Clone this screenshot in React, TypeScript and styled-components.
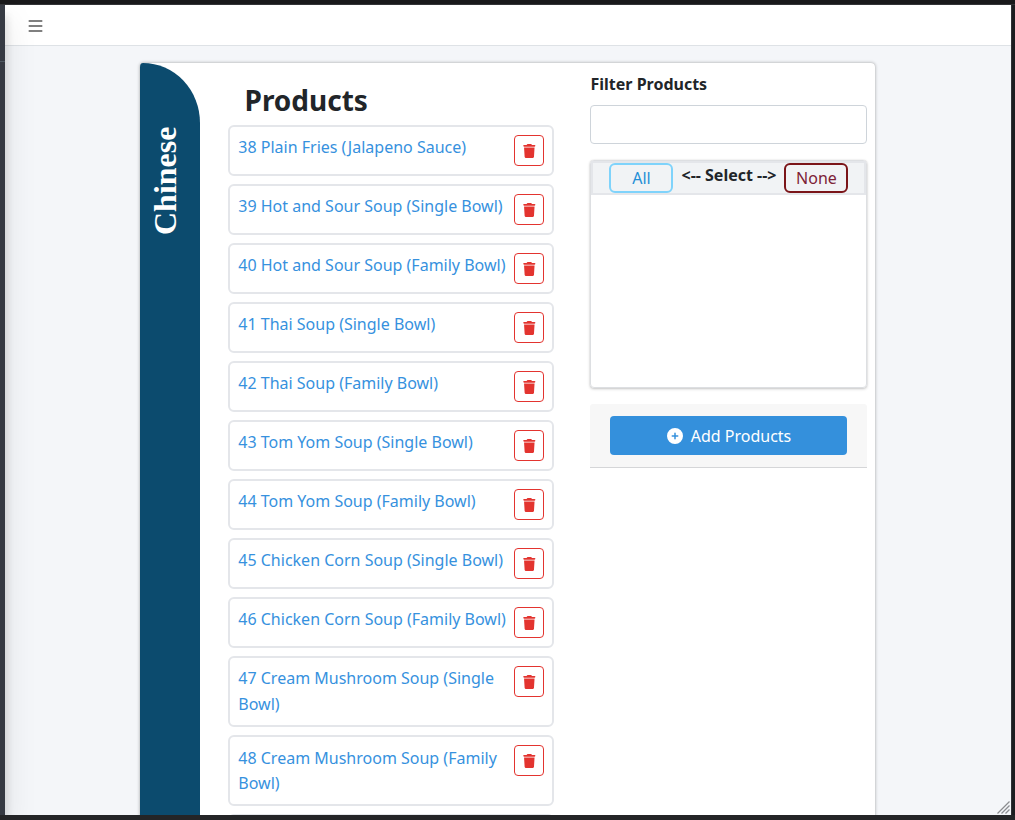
import React from "react";
import styled, { createGlobalStyle } from "styled-components";
import { FaBars, FaCirclePlus, FaTrash } from "react-icons/fa6";

const GlobalStyle = createGlobalStyle`
  *, *::before, *::after { box-sizing: border-box; }
  body {
    margin: 0;
    font: 400 16px/25.6px "Noto Sans", sans-serif;
    color: #212529;
    background: #1b1c1f;
  }
`;

const Frame = styled.div`
  display: grid;
  grid-template-columns: 5px 1006px 4px;
  grid-template-rows: 5px 810px 5px;
  width: 1015px;
  height: 820px;
  overflow: hidden;
  background: #1b1c1f;
`;

const TopEdge = styled.div`
  grid-column: 1 / -1;
  background: #19191b;
  border-bottom: 1px solid #333437;
`;

const SidebarEdge = styled.div`
  background: #363a43;
  padding-top: 56px;
  box-shadow: 0 14px 28px rgba(0, 0, 0, 0.25), 0 10px 10px rgba(0, 0, 0, 0.22);
  z-index: 1;
`;

const SidebarRule = styled.div`
  height: 1px;
  background: #4f5962;
`;

const Page = styled.div`
  position: relative;
  display: flex;
  flex-direction: column;
  background: #f4f6f9;
  overflow: hidden;
`;

const RightEdge = styled.div`
  background: #1c1d20;
  border-left: 1px solid #303135;
`;

const BottomEdge = styled.div`
  grid-column: 1 / -1;
  background: #242527;
  z-index: 2;
`;

const Navbar = styled.header`
  flex: none;
  display: flex;
  align-items: center;
  height: 41px;
  padding: 2px 0 0 22px;
  background: #fff;
  border-bottom: 1px solid #dee2e6;
  color: #808080;
  svg { display: block; transform: translateX(0.5px); }
`;

const Card = styled.main`
  flex: none;
  display: flex;
  width: 735px;
  height: 900px;
  margin: 17px 0 0 135px;
  background: #fff;
  border-radius: 4px;
  box-shadow: 0 0 1px rgba(0, 0, 0, 0.2), 0 0 3px 1px rgba(0, 0, 0, 0.18);
`;

const CategoryRail = styled.aside`
  flex: none;
  display: flex;
  width: 60px;
  padding-top: 62px;
  background: #0c4b6e;
  border-radius: 3px 57px 0 0 / 4px 60px 0 0;
`;

const CategoryName = styled.h1`
  margin: 0;
  height: 110px;
  width: 50px;
  writing-mode: vertical-rl;
  transform: rotate(180deg);
  font: 700 32px/50px "Liberation Serif", serif;
  color: #fff;
  white-space: nowrap;
`;

const ProductColumn = styled.section`
  flex: none;
  width: 326px;
  margin-left: 28px;
  padding-top: 16px;
`;

const Title = styled.h2`
  margin: 0;
  padding-left: 16.5px;
  height: 46px;
  font-size: 28px;
  line-height: 43px;
  font-weight: 700;
`;

const ProductRow = styled.div`
  display: flex;
  align-items: flex-start;
  justify-content: space-between;
  margin-bottom: 8px;
  padding: 8px 8px 8px 8.3px;
  border: 2px solid #e4e6ea;
  border-radius: 6px;
`;

const ProductLink = styled.a`
  width: 270px;
  margin: 0.35px 0 -0.35px;
  color: #3691de;
`;

const DeleteButton = styled.button`
  flex: none;
  display: flex;
  align-items: center;
  justify-content: center;
  width: 30px;
  height: 31px;
  padding: 0;
  color: #e3342f;
  background: #fff;
  border: 1px solid #e3342f;
  border-radius: 4px;
  svg { transform: translateX(0.3px); }
`;

const FilterColumn = styled.section`
  flex: none;
  width: 277px;
  margin-left: 36px;
  padding-top: 9px;
`;

const Label = styled.label`
  display: block;
  height: 33px;
  padding-left: 0.5px;
  font-weight: 700;
`;

const FilterInput = styled.input`
  display: block;
  width: 100%;
  height: 39px;
  border: 1px solid #ced4da;
  border-radius: 4px;
  background: #fff;
`;

const Picker = styled.div`
  height: 228px;
  margin-top: 16px;
  border: 1px solid #dddfe2;
  border-radius: 4px;
  box-shadow: 0 0 1px rgba(0, 0, 0, 0.2), 0 1px 3px rgba(0, 0, 0, 0.22);
`;

const PickerHeader = styled.div`
  display: flex;
  align-items: flex-start;
  justify-content: space-between;
  height: 34px;
  padding: 0 16px;
  background: #f1f3f5;
  border: 2px solid #e4e6ea;
`;

const PickButton = styled.button<{ $edge: string; $ink: string }>`
  width: 64px;
  height: 30px;
  padding: 0 0 0 1px;
  font: 400 16px/26px "Noto Sans", sans-serif;
  color: ${(p) => p.$ink};
  background: transparent;
  border: 2px solid ${(p) => p.$edge};
  border-radius: 6px;
`;

const PickLabel = styled.strong`
  padding-left: 1px;
  line-height: 24px;
  white-space: nowrap;
`;

const Actions = styled.div`
  height: 64px;
  margin-top: 16px;
  padding: 12px 20px;
  background: #f7f7f7;
  border-bottom: 1px solid #d5d6d8;
  border-radius: 3px 3px 0 0;
`;

const AddButton = styled.button`
  display: flex;
  align-items: center;
  justify-content: center;
  gap: 8px;
  width: 100%;
  height: 39px;
  padding: 0 0 0 1px;
  font: 400 16px/26px "Noto Sans", sans-serif;
  color: #fff;
  background: #3490dc;
  border: 0;
  border-radius: 4px;
`;

const ResizeGrip = styled.svg`
  position: absolute;
  right: 1px;
  bottom: 1px;
`;

const products = [
  "38 Plain Fries (Jalapeno Sauce)",
  "39 Hot and Sour Soup (Single Bowl)",
  "40 Hot and Sour Soup (Family Bowl)",
  "41 Thai Soup (Single Bowl)",
  "42 Thai Soup (Family Bowl)",
  "43 Tom Yom Soup (Single Bowl)",
  "44 Tom Yom Soup (Family Bowl)",
  "45 Chicken Corn Soup (Single Bowl)",
  "46 Chicken Corn Soup (Family Bowl)",
  "47 Cream Mushroom Soup (Single Bowl)",
  "48 Cream Mushroom Soup (Family Bowl)",
];

export default function App() {
  return (
    <Frame>
      <GlobalStyle />
      <TopEdge />
      <SidebarEdge>
        <SidebarRule />
      </SidebarEdge>
      <Page>
        <Navbar>
          <FaBars size={16} />
        </Navbar>
        <Card>
          <CategoryRail>
            <CategoryName>Chinese</CategoryName>
          </CategoryRail>
          <ProductColumn>
            <Title>Products</Title>
            {products.map((name) => (
              <ProductRow key={name}>
                <ProductLink>{name}</ProductLink>
                <DeleteButton aria-label="Delete">
                  <FaTrash size={14} />
                </DeleteButton>
              </ProductRow>
            ))}
            <ProductRow />
          </ProductColumn>
          <FilterColumn>
            <Label htmlFor="filter">Filter Products</Label>
            <FilterInput id="filter" />
            <Picker>
              <PickerHeader>
                <PickButton $edge="#7fd3fb" $ink="#1f8fd6">All</PickButton>
                <PickLabel>&lt;-- Select --&gt;</PickLabel>
                <PickButton $edge="#7b1519" $ink="#7d2136">None</PickButton>
              </PickerHeader>
            </Picker>
            <Actions>
              <AddButton>
                <FaCirclePlus size={16} />
                Add Products
              </AddButton>
            </Actions>
          </FilterColumn>
        </Card>
        <ResizeGrip width="13" height="13" viewBox="0 0 13 13" stroke="#8b8d91" strokeWidth="1.3">
          <path d="M0.5 12.5 12.5 0.5M4.5 12.5 12.5 4.5M8.5 12.5 12.5 8.5" />
        </ResizeGrip>
      </Page>
      <RightEdge />
      <BottomEdge />
    </Frame>
  );
}
